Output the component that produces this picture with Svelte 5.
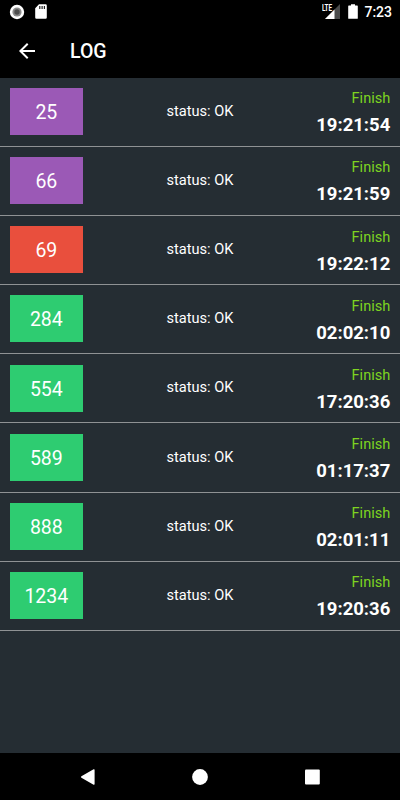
<script>
  const entries = [
    { number: 25, color: 'purple', time: '19:21:54' },
    { number: 66, color: 'purple', time: '19:21:59' },
    { number: 69, color: 'red', time: '19:22:12' },
    { number: 284, color: 'green', time: '02:02:10' },
    { number: 554, color: 'green', time: '17:20:36' },
    { number: 589, color: 'green', time: '01:17:37' },
    { number: 888, color: 'green', time: '02:01:11' },
    { number: 1234, color: 'green', time: '19:20:36' }
  ];
</script>

<div class="screen">
  <div class="status-bar">
    <div class="status-left">
      <svg width="16" height="16" viewBox="0 0 16 16">
        <circle cx="8" cy="8" r="7.2" fill="#fff" />
        <circle cx="8" cy="8" r="4.6" fill="#8c8c8c" />
        <circle cx="8" cy="8" r="2.7" fill="#4e4e4e" />
      </svg>
      <svg width="12" height="15" viewBox="0 0 12 15">
        <path d="M4 0.3h6.6a1.2 1.2 0 0 1 1.2 1.2v12a1.2 1.2 0 0 1-1.2 1.2H1.4a1.2 1.2 0 0 1-1.2-1.2V4.3z" fill="#fff" />
        <path d="M4.2 2h1.2v3H4.2zM6.5 2h1.2v3H6.5zM8.8 2H10v3H8.8z" fill="#222" />
      </svg>
    </div>
    <div class="status-right">
      <div class="signal">
        <svg width="15" height="15" viewBox="0 0 15 15">
          <path d="M15 0v15H0z" fill="#4b4b4b" />
          <path d="M9.5 5.5V15H0z" fill="#fff" />
        </svg>
        <span>LTE</span>
      </div>
      <svg class="battery" width="10" height="15" viewBox="0 0 10 15">
        <path d="M3 0.2h4v1.4h2.2q.6 0 .6.6v12q0 .6-.6.6H.8q-.6 0-.6-.6v-12q0-.6.6-.6H3z" fill="#fff" />
      </svg>
      <span class="clock">7:23</span>
    </div>
  </div>

  <header class="toolbar">
    <button class="back" aria-label="Back">
      <svg width="16" height="16" viewBox="4 4 16 16">
        <path d="M20 11H7.83l5.59-5.59L12 4l-8 8 8 8 1.41-1.41L7.83 13H20v-2z" fill="#fff" />
      </svg>
    </button>
    <h1>LOG</h1>
  </header>

  <main>
    {#each entries as entry (entry.number)}
      <div class="row">
        <div class="number {entry.color}">{entry.number}</div>
        <div class="status">status: OK</div>
        <div class="result">
          <span class="label">Finish</span>
          <span class="time">{entry.time}</span>
        </div>
      </div>
    {/each}
  </main>

  <nav class="nav-bar">
    <svg width="16" height="18" viewBox="0 0 16 18">
      <path d="M13.6 1.3 1.4 8.3q-1 .7 0 1.4l12.2 7q1 .4 1-.6V1.9q0-1-1-.6z" fill="#fff" />
    </svg>
    <svg width="16" height="16" viewBox="0 0 16 16">
      <circle cx="8" cy="8" r="7.9" fill="#fff" />
    </svg>
    <svg width="16" height="16" viewBox="0 0 16 16">
      <rect x="1" y="0.4" width="14.8" height="15" rx="1" fill="#fff" />
    </svg>
  </nav>
</div>

<style>
  :global(body) {
    margin: 0;
    background: #000;
  }

  .screen {
    display: flex;
    flex-direction: column;
    width: 400px;
    height: 800px;
    overflow: hidden;
    background: #252d33;
    color: #fff;
    font-family: Roboto, sans-serif;
  }

  svg {
    display: block;
    flex-shrink: 0;
  }

  .status-bar {
    display: flex;
    justify-content: space-between;
    height: 24px;
    box-sizing: border-box;
    padding: 4px 8px 0 9.4px;
    background: #000;
  }

  .status-left,
  .status-right {
    display: flex;
    align-items: flex-start;
  }

  .status-left {
    gap: 9.5px;
  }

  .signal {
    position: relative;
    margin-right: 8px;
  }

  .signal span {
    position: absolute;
    top: 0;
    left: -3px;
    background: #000;
    font-size: 8.5px;
    font-weight: 700;
    line-height: 8px;
    letter-spacing: -0.2px;
    transform: scaleX(0.75);
    transform-origin: left;
  }

  .battery {
    margin-right: 6px;
  }

  .clock {
    font-size: 14px;
    font-weight: 500;
    line-height: 17px;
  }

  .toolbar {
    display: flex;
    align-items: center;
    height: 53.7px;
    padding-left: 19px;
    background: #000;
  }

  .back {
    padding: 0;
    border: none;
    background: none;
  }

  h1 {
    margin: 3px 0 0 35px;
    font-size: 19.5px;
    font-weight: 500;
    line-height: 24px;
  }

  main {
    flex: 1;
  }

  .row {
    display: grid;
    grid-template-columns: 73.3px 1fr 73.3px;
    align-items: center;
    height: 69.17px;
    box-sizing: border-box;
    padding: 0 9.7px;
    border-bottom: 1px solid #8f9294;
  }

  .number {
    height: 47px;
    margin-top: -0.7px;
    font-size: 19.5px;
    line-height: 50.4px;
    text-align: center;
  }

  .purple {
    background: #9b59b6;
  }

  .red {
    background: #e94f3d;
  }

  .green {
    background: #2ecc71;
  }

  .status {
    margin-top: -2px;
    font-size: 14.6px;
    line-height: 20px;
    text-align: center;
  }

  .result {
    display: flex;
    flex-direction: column;
    align-items: flex-end;
    padding-top: 2px;
    white-space: nowrap;
  }

  .label {
    color: #7ed321;
    font-size: 14.6px;
    line-height: 24px;
  }

  .time {
    margin-top: 1px;
    font-size: 18.5px;
    font-weight: 700;
    line-height: 28px;
  }

  .nav-bar {
    display: flex;
    justify-content: space-between;
    align-items: center;
    height: 47px;
    box-sizing: border-box;
    padding: 0 80px;
    background: #000;
  }
</style>
